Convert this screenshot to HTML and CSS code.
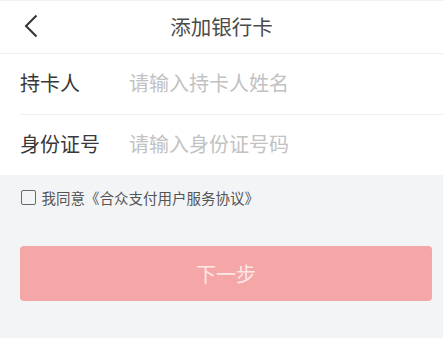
FILE: index.html
```html
<!DOCTYPE html>
<html>

<head>
  <meta charset="utf-8" />
  <title>添加银行卡</title>
  <link rel="stylesheet" href="styles.css">
</head>

<body>
  <div class="topbar">
    <span class="back-btn">
      <svg width="14" height="24" viewBox="0 0 14 24">
        <polyline points="12.5,1.5 2,12 12.5,22.5" fill="none" stroke="#333" stroke-width="2" />
      </svg>
    </span>
    <div class="topbar-title">添加银行卡</div>
  </div>

  <div class="form">
    <div class="form-row">
      <label class="form-label">持卡人</label>
      <input class="form-input" type="text" placeholder="请输入持卡人姓名" />
    </div>
    <div class="form-row">
      <label class="form-label">身份证号</label>
      <input class="form-input" type="text" placeholder="请输入身份证号码" />
    </div>
  </div>

  <div class="agree">
    <span class="agree-box"></span>
    <span>我同意《合众支付用户服务协议》</span>
  </div>

  <div class="buttons">
    <button class="next-btn">下一步</button>
  </div>
</body>

</html>
```

FILE: styles.css
```css
body {
  margin: 0;
  background: #f3f4f6;
  font-family: "Noto Sans CJK SC", "Noto Sans", sans-serif;
  color: #333;
}

.topbar {
  position: relative;
  height: 52px;
  background: #fff;
  border-top: 1px solid #f0f0f0;
  border-bottom: 1px solid #efefef;
  display: flex;
  align-items: center;
  justify-content: center;
}

.back-btn {
  position: absolute;
  left: 24px;
  top: 13px;
  display: flex;
}

.topbar-title {
  font-size: 20.5px;
  color: #4a4a4a;
  padding-bottom: 3px;
}

.form {
  background: #fff;
  padding-left: 20px;
}

.form-row {
  height: 57px;
  padding-bottom: 3px;
  display: flex;
  align-items: center;
  border-bottom: 1px solid #f0f0f0;
}

.form-row:last-child {
  border-bottom: none;
}

.form-label {
  width: 109px;
  font-size: 20px;
  color: #383838;
}

.form-input {
  flex: 1;
  border: none;
  outline: none;
  padding: 0;
  font-family: inherit;
  font-size: 20px;
  color: #333;
  background: transparent;
}

.form-input::placeholder {
  color: #c2c2c2;
}

.agree {
  display: flex;
  align-items: center;
  padding: 13px 21px 0;
  height: 19px;
  font-size: 14.5px;
  color: #555;
}

.agree-box {
  width: 12.5px;
  height: 12.5px;
  border: 1.5px solid #6a6a6a;
  border-radius: 2px;
  margin-right: 6px;
}

.buttons {
  padding: 39px 11px 0 20px;
}

.next-btn {
  display: block;
  width: 100%;
  height: 55px;
  border: none;
  border-radius: 4px;
  background: #f5a7a7;
  color: #fde8e8;
  font-family: inherit;
  font-size: 20px;
}
```
